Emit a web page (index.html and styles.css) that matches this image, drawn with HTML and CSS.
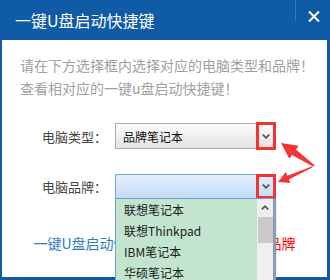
FILE: index.html
```html
<!DOCTYPE html>
<html lang="zh">
<head>
<meta charset="utf-8">
<link rel="stylesheet" href="styles.css">
</head>
<body>
<div class="window">
  <div class="titlebar">
    <span class="title">一键U盘启动快捷键</span>
    <span class="sep"></span>
    <svg class="close" width="12" height="11" viewBox="0 0 12 11"><path d="M1 0.5 L11 10.5 M11 0.5 L1 10.5" stroke="#fff" stroke-width="2" fill="none"/></svg>
  </div>
  <div class="content">
    <p class="intro">请在下方选择框内选择对应的电脑类型和品牌！<br>查看相对应的一键u盘启动快捷键！</p>
    <div class="form">
      <div class="row">
        <span class="label">电脑类型：</span>
        <div class="select select-gray">
          <span class="value">品牌笔记本</span>
          <span class="mark">
            <svg width="8" height="5" viewBox="0 0 8 5"><path d="M0.8 0.6 L4 3.8 L7.2 0.6" stroke="#555" stroke-width="1.8" fill="none"/></svg>
          </span>
        </div>
      </div>
      <div class="row row2">
        <span class="label">电脑品牌：</span>
        <div class="select select-blue">
          <span class="value"></span>
          <span class="mark">
            <svg width="8" height="5" viewBox="0 0 8 5"><path d="M0.8 0.6 L4 3.8 L7.2 0.6" stroke="#555" stroke-width="1.8" fill="none"/></svg>
          </span>
          <div class="list">
            <ul class="items">
              <li>联想笔记本</li>
              <li>联想Thinkpad</li>
              <li>IBM笔记本</li>
              <li>华硕笔记本</li>
              <li>戴尔笔记本</li>
            </ul>
            <div class="scroll">
              <div class="up"><svg width="8" height="5" viewBox="0 0 8 5"><path d="M0.8 4.4 L4 1.2 L7.2 4.4" stroke="#555" stroke-width="1.6" fill="none"/></svg></div>
              <div class="thumb"></div>
            </div>
          </div>
        </div>
      </div>
    </div>
    <p class="foot"><span class="blue">一键U盘启动快捷键</span><span class="red">，适用于各种电脑品牌</span></p>
  </div>
  <svg class="arrows" width="330" height="280" viewBox="0 0 330 280">
    <polygon fill="#f53535" points="281,143 298.7,145.8 296,149.5 314.6,165.2 313.4,166.8 292,155.1 289.3,158.8"/>
    <polygon fill="#f53535" points="278,182 285.7,172.1 287.3,175.8 311.7,166.4 312.3,167.6 288.9,179.4 290.5,183.1"/>
  </svg>
</div>
</body>
</html>
```

FILE: styles.css
```css
html, body {
  margin: 0;
  padding: 0;
  overflow: hidden;
}
body {
  font-family: "Noto Sans CJK SC", "Noto Sans", sans-serif;
}
.window {
  position: relative;
  width: 330px;
  height: 280px;
  background: #0f5ba6;
  display: flex;
  flex-direction: column;
  overflow: hidden;
}
.titlebar {
  height: 40px;
  flex: none;
  display: flex;
  align-items: center;
  padding-left: 15px;
}
.title {
  color: #fff;
  font-size: 16px;
  flex: 1;
}
.sep {
  align-self: flex-start;
  width: 1px;
  height: 21px;
  background: #3b78b8;
  margin-right: 12px;
}
.close {
  margin-right: 10px;
  margin-top: -8px;
}
.content {
  flex: 1;
  background: #fff;
  margin: 0 3px 3px 2px;
  padding: 14px 0 0 18px;
}
.intro {
  margin: 0;
  font-size: 14px;
  line-height: 23px;
  color: #a0a0a0;
}
.form {
  margin: 23px 0 0 22px;
}
.row {
  display: flex;
  align-items: center;
  height: 26px;
}
.row2 {
  margin-top: 24px;
}
.label {
  width: 73px;
  font-size: 13px;
  color: #444;
}
.select {
  position: relative;
  width: 159px;
  height: 26px;
  box-sizing: border-box;
  display: flex;
  align-items: center;
  padding-left: 7px;
}
.select-gray {
  border: 1px solid #adadad;
  background: linear-gradient(#fdfdfd, #e3e3e3);
}
.select-blue {
  height: 25px;
  border: 1px solid #74a5dc;
  background: linear-gradient(#e4eefb, #c3dbf6);
}
.value {
  font-size: 12px;
  color: #111;
}
.mark {
  position: absolute;
  right: -3px;
  top: -2px;
  width: 20px;
  height: 28px;
  box-sizing: border-box;
  border: 3px solid #f23434;
  display: flex;
  align-items: center;
  justify-content: center;
}
.select-blue .mark {
  height: 25px;
  top: -1px;
}
.list {
  position: absolute;
  left: -1px;
  top: 23px;
  width: 159px;
  height: 120px;
  box-sizing: border-box;
  border: 1px solid #6d9fdb;
  background: #c3e5d0;
  box-shadow: 2px 1px 1px #9a9a9a;
  display: flex;
  z-index: 2;
}
.items {
  list-style: none;
  margin: 0;
  padding: 0 0 0 8px;
  flex: 1;
}
.items li {
  font-size: 12px;
  line-height: 21px;
  height: 21px;
  color: #1a1a1a;
}
.scroll {
  width: 16px;
  background: #efefef;
  display: flex;
  flex-direction: column;
  align-items: center;
}
.up {
  height: 18px;
  display: flex;
  align-items: center;
  justify-content: center;
}
.thumb {
  width: 15px;
  height: 26px;
  background: #cacaca;
}
.foot {
  margin: 34px 0 0 -18px;
  text-align: center;
  font-size: 14px;
  line-height: 20px;
}
.blue {
  color: #2c7cc4;
}
.red {
  color: #f00;
}
.arrows {
  position: absolute;
  left: 0;
  top: 0;
  pointer-events: none;
  z-index: 3;
}
```
